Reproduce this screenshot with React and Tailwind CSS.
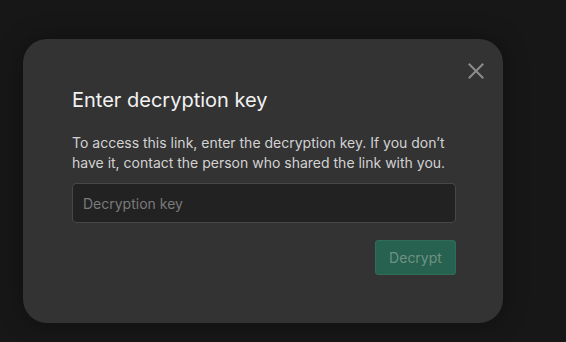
import React from "react";

export default function App() {
  return (
    <div className="w-[566px] h-[342px] bg-[#171717] overflow-hidden" style={{ fontFamily: "Inter, 'Noto Sans', sans-serif" }}>
      <div className="pt-[39px] pl-[23px]">
        <div className="relative w-[480px] h-[284px] rounded-[24px] bg-[#333333] shadow-[0_0_24px_rgba(0,0,0,0.35)] px-[49px] pt-[47px]">
          <button className="absolute right-[17px] top-[22px] w-[20px] h-[20px] flex items-center justify-center">
            <svg width="16" height="16" viewBox="0 0 16 16" fill="none" stroke="#8c8c8c" strokeWidth="2" strokeLinecap="square">
              <path d="M1.5 1.5 L14.5 14.5 M14.5 1.5 L1.5 14.5" />
            </svg>
          </button>
          <h2 className="text-[20px] leading-[28px] text-[#f2f2f2] font-normal">Enter decryption key</h2>
          <p className="mt-[19px] text-[14px] leading-[20px] text-[#d2d2d2]">
            To access this link, enter the decryption key. If you don’t have it, contact the person who shared the link with you.
          </p>
          <div className="mt-[10px] w-[384px] h-[40px] rounded-[4px] border border-[#474747] bg-[#222222] flex items-center px-[10px]">
            <span className="text-[14px] text-[#7a7a7a]">Decryption key</span>
          </div>
          <div className="mt-[17px] flex justify-end w-[384px]">
            <button className="w-[81px] h-[35px] rounded-[3px] bg-[#27614f] border border-[#2e6d59] text-[14px] text-[#6f9184]">
              Decrypt
            </button>
          </div>
        </div>
      </div>
    </div>
  );
}
